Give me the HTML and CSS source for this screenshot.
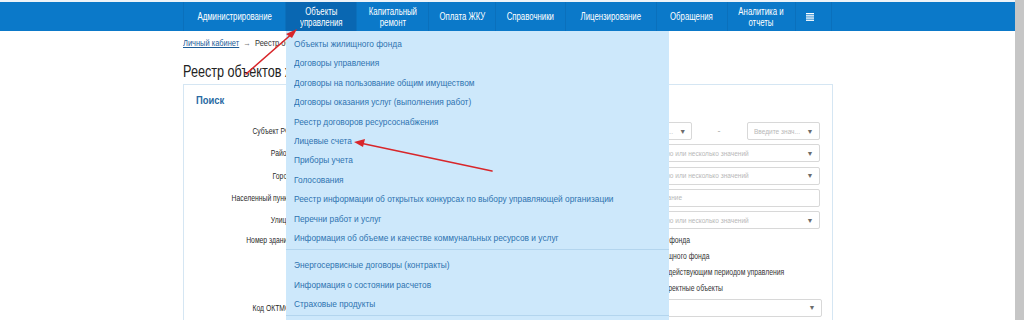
FILE: index.html
```html
<!DOCTYPE html>
<html lang="ru">
<head>
<meta charset="utf-8">
<title>Реестр объектов жилищного фонда</title>
<link rel="stylesheet" href="styles.css">
</head>
<body>
<div class="page">
  <div class="main">
    <div class="topline"></div>
    <nav class="nav">
      <ul class="nav-inner">
        <li class="nav-item w103"><span class="nt">Администрирование</span></li>
        <li class="nav-item w71 active"><span class="nt">Объекты<br>управления</span>
          <div class="dropdown">
            <a class="dd-item">Объекты жилищного фонда</a>
            <a class="dd-item">Договоры управления</a>
            <a class="dd-item">Договоры на пользование общим имуществом</a>
            <a class="dd-item">Договоры оказания услуг (выполнения работ)</a>
            <a class="dd-item">Реестр договоров ресурсоснабжения</a>
            <a class="dd-item">Лицевые счета</a>
            <a class="dd-item">Приборы учета</a>
            <a class="dd-item">Голосования</a>
            <a class="dd-item">Реестр информации об открытых конкурсах по выбору управляющей организации</a>
            <a class="dd-item">Перечни работ и услуг</a>
            <a class="dd-item">Информация об объеме и качестве коммунальных ресурсов и услуг</a>
            <div class="dd-sep"></div>
            <a class="dd-item">Энергосервисные договоры (контракты)</a>
            <a class="dd-item">Информация о состоянии расчетов</a>
            <a class="dd-item">Страховые продукты</a>
            <div class="dd-sep"></div>
          </div>
        </li>
        <li class="nav-item w72"><span class="nt">Капитальный<br>ремонт</span></li>
        <li class="nav-item w67"><span class="nt">Оплата ЖКУ</span></li>
        <li class="nav-item w70"><span class="nt">Справочники</span></li>
        <li class="nav-item w91"><span class="nt">Лицензирование</span></li>
        <li class="nav-item w71"><span class="nt">Обращения</span></li>
        <li class="nav-item w68"><span class="nt">Аналитика и<br>отчеты</span></li>
        <li class="nav-item w37">
          <svg class="burger" width="8" height="8" viewBox="0 0 8 8"><rect x="0" y="0" width="8" height="1.3" fill="#fff"/><rect x="0" y="2.2" width="8" height="1.3" fill="#fff"/><rect x="0" y="4.4" width="8" height="1.3" fill="#fff"/><rect x="0" y="6.6" width="8" height="1.3" fill="#fff"/></svg>
        </li>
      </ul>
    </nav>
    <div class="content">
      <div class="crumbs"><a class="crumb-link">Личный кабинет</a><span class="crumb-arrow">→</span><span class="crumb-current">Реестр объектов жилищного фонда</span></div>
      <h1 class="title"><span class="title-text">Реестр объектов жилищного фонда</span></h1>
      <div class="card">
        <div class="card-title"><span class="ct">Поиск</span></div>
        <div class="form">
          <div class="row">
            <div class="label"><span class="lt">Субъект РФ</span></div>
            <div class="field pair">
              <div class="select small"><span class="ph">Введите знач...</span><span class="caret">▼</span></div>
              <span class="dash">-</span>
              <div class="select small2"><span class="ph">Введите знач...</span><span class="caret">▼</span></div>
            </div>
          </div>
          <div class="row">
            <div class="label"><span class="lt">Район</span></div>
            <div class="field"><div class="select"><span class="ph">Выберите одно или несколько значений</span><span class="caret">▼</span></div></div>
          </div>
          <div class="row">
            <div class="label"><span class="lt">Город</span></div>
            <div class="field"><div class="select"><span class="ph">Выберите одно или несколько значений</span><span class="caret">▼</span></div></div>
          </div>
          <div class="row">
            <div class="label"><span class="lt">Населенный пункт</span></div>
            <div class="field"><div class="select"><span class="ph">Введите название</span></div></div>
          </div>
          <div class="row">
            <div class="label"><span class="lt">Улица</span></div>
            <div class="field"><div class="select"><span class="ph">Выберите одно или несколько значений</span><span class="caret">▼</span></div></div>
          </div>
          <div class="row checks-row">
            <div class="label"><span class="lt">Номер здания</span></div>
            <div class="checks">
              <label class="check"><span class="box"></span><span class="cl c1">Объекты жилищного фонда</span></label>
              <label class="check"><span class="box"></span><span class="cl c2">Объекты нежилищного фонда</span></label>
              <label class="check"><span class="box"></span><span class="cl c3">Объекты с действующим периодом управления</span></label>
              <label class="check"><span class="box"></span><span class="cl c4">Некорректные объекты</span></label>
            </div>
          </div>
          <div class="row oktmo-row">
            <div class="label"><span class="lt">Код ОКТМО</span></div>
            <div class="field"><div class="select wide"><span class="ph"></span><span class="caret">▼</span></div></div>
          </div>
        </div>
      </div>
    </div>
  </div>
  <div class="scrollbar"></div>
  <svg class="arrows" width="1024" height="320" viewBox="0 0 1024 320">
    <g stroke="#d8262a" stroke-width="1.6" fill="none" stroke-linecap="round">
      <line x1="246" y1="74" x2="294" y2="32"/>
      <line x1="492" y1="171" x2="360" y2="143"/>
    </g>
    <polygon points="297,29 286,34 292,38" fill="#d8262a"/>
    <polygon points="354,142 365,139 363,147" fill="#d8262a"/>
  </svg>
</div>
</body>
</html>
```
FILE: styles.css
```css
* { box-sizing: border-box; }
html, body { margin: 0; padding: 0; }
body {
  width: 1024px;
  height: 320px;
  overflow: hidden;
  background: #fff;
  font-family: "Liberation Sans", Arial, sans-serif;
  color: #333;
}
.page { position: relative; display: flex; width: 1024px; height: 320px; overflow: hidden; }
.main { width: 1015px; flex: none; }
.scrollbar { width: 9px; flex: none; background: #c6c6c6; }
.topline { height: 2px; background: #eef3f8; }

/* navigation */
.nav { background: #0b79c9; height: 29px; }
.nav-inner {
  list-style: none; margin: 0 auto; padding: 0;
  width: 650px; height: 29px;
  display: flex;
  border-left: 1px solid #0a70bc;
}
.nav-item {
  position: relative;
  height: 29px;
  display: flex; align-items: center; justify-content: center;
  text-align: center;
  color: #fff;
  font-size: 10px;
  line-height: 11px;
  border-right: 1px solid #0a70bc;
}
.nt { display: inline-block; transform: scaleX(0.78); white-space: nowrap; }
.nav-item.active { background: #0967b2; }
.w103 { width: 103px; } .w71 { width: 71px; } .w72 { width: 72px; }
.w67 { width: 67px; } .w70 { width: 70px; } .w91 { width: 91px; }
.w68 { width: 68px; } .w37 { width: 37px; }
.burger { display: block; margin-left: -8px; }

/* dropdown */
.dropdown {
  position: absolute;
  top: 29px; left: 0;
  width: 383px; height: 300px;
  background: #cde8fb;
  padding-top: 4px;
  text-align: left;
  z-index: 5;
  display: flex; flex-direction: column;
}
.dd-item {
  display: block;
  padding-left: 8px;
  height: 19.4px;
  line-height: 19.4px;
  font-size: 9px;
  color: #2e73b0;
  white-space: nowrap;
  transform: scaleX(0.925);
  transform-origin: 8px 50%;
}
.dd-sep { height: 1px; background: #b3d5ee; margin: 1px 0 6px; flex: none; }

/* content */
.content { width: 650px; margin: 0 auto; }
.crumbs {
  font-size: 9px; line-height: 12px; margin-top: 6px; white-space: nowrap;
  transform: scaleX(0.83); transform-origin: 0 50%;
}
.crumb-link { color: #1d5c97; text-decoration: underline; }
.crumb-arrow { color: #777; margin: 0 5px; }
.crumb-current { color: #333; }
.title {
  margin: 13px 0 0;
  font-weight: normal;
  font-size: 16px;
  line-height: 20px;
  color: #222;
  white-space: nowrap;
}
.title-text { display: inline-block; transform: scaleX(0.79); transform-origin: 0 50%; }
.card {
  margin-top: 2px;
  border: 1px solid #d5e6f3;
  border-bottom: none;
  height: 240px;
  padding: 8px 12px 0 0;
}
.card-title {
  padding-left: 12px;
  font-size: 11.5px;
  font-weight: bold;
  color: #2a6aa3;
  line-height: 14px;
}
.ct { display: inline-block; transform: scaleX(0.82); transform-origin: 0 50%; }
.form { margin-top: 15px; display: flex; flex-direction: column; gap: 4.3px; }
.row { display: grid; grid-template-columns: 107px 1fr; align-items: center; }
.checks-row { align-items: start; margin-top: -1px; }
.oktmo-row { margin-top: -2px; }
.label {
  text-align: right;
  font-size: 8.5px;
  color: #2a2a2a;
  white-space: nowrap;
}
.lt { display: inline-block; transform: scaleX(0.8); transform-origin: 100% 50%; }
.checks-row .label { line-height: 16px; }
.field { justify-self: end; width: 200px; }
.pair { display: flex; align-items: center; }
.dash { flex: 1; text-align: center; color: #aaa; font-size: 9px; }
.select {
  height: 18px;
  border: 1px solid #d8d8d8;
  border-radius: 2px;
  background: #fff;
  display: flex; align-items: center; justify-content: space-between;
  padding: 0 5px 0 6px;
  font-size: 7.5px;
  white-space: nowrap;
  overflow: hidden;
}
.select.small { width: 72px; }
.select.small2 { width: 73px; }
.select.wide { width: 202px; }
.ph { color: #b8b8b8; display: inline-block; transform: scaleX(0.87); transform-origin: 0 50%; }
.caret { color: #6b6b6b; font-size: 7px; flex: none; }
.checks { justify-self: end; width: 240px; display: flex; flex-direction: column; }
.check { display: flex; align-items: center; height: 16px; font-size: 8.5px; color: #333; white-space: nowrap; }
.box { width: 10px; height: 10px; border: 1px solid #ccc; margin-right: 6px; flex: none; }
.cl { display: inline-block; transform: scaleX(0.8); transform-origin: 0 50%; }
.c1 { margin-left: 6px; }
.c2 { margin-left: 18px; }
.c3 { margin-left: 37px; }
.c4 { margin-left: 53px; }
.arrows { position: absolute; left: 0; top: 0; pointer-events: none; z-index: 10; }
```
